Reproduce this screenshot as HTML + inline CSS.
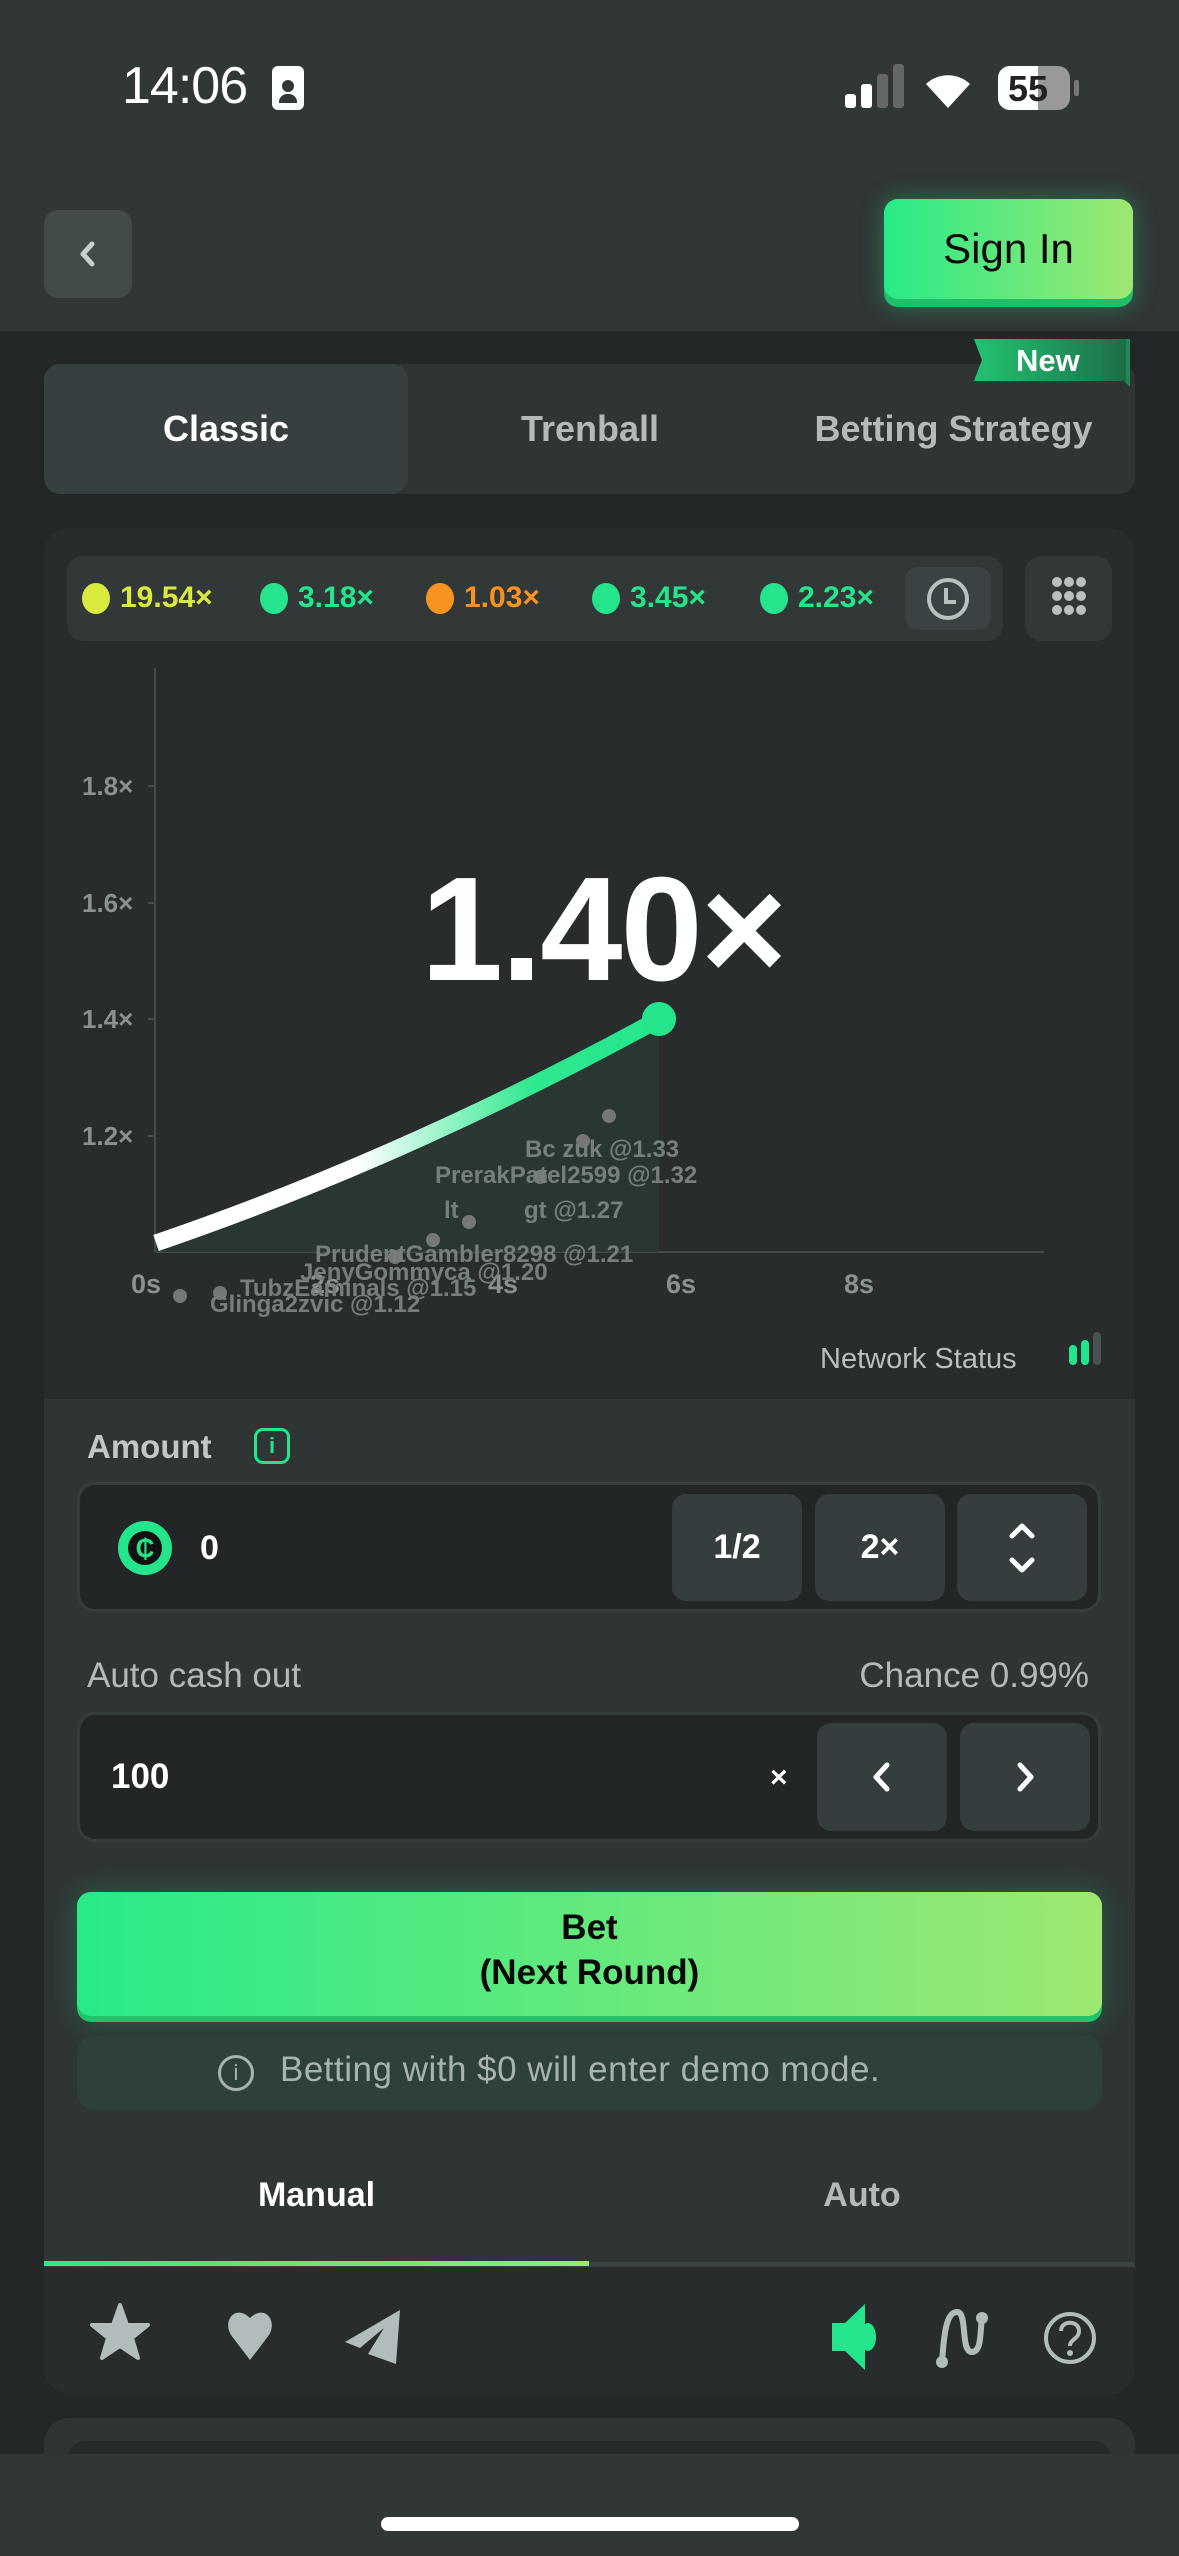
<!DOCTYPE html>
<html><head><meta charset="utf-8"><style>
*{margin:0;padding:0;box-sizing:border-box}
body{width:1179px;height:2556px;background:#232727;position:relative;overflow:hidden;font-family:"Liberation Sans",sans-serif;font-weight:bold}
.a{position:absolute}
.btn{position:absolute;background:#363d3e;border-radius:14px;color:#fff;display:flex;align-items:center;justify-content:center;font-size:34px}
</style></head><body>
<!-- header -->
<div class="a" style="left:0;top:0;width:1179px;height:331px;background:#313636"></div>
<div class="a" style="left:122px;top:56px;font-size:52px;color:#fff;font-weight:normal;letter-spacing:-1px">14:06</div>
<div class="a" style="left:272px;top:66px;width:32px;height:44px;background:#fff;border-radius:6px"><div class="a" style="left:10px;top:14px;width:12px;height:12px;border-radius:6px;background:#313636"></div><div class="a" style="left:7px;top:28px;width:18px;height:9px;border-radius:8px 8px 0 0;background:#313636"></div></div>
<div class="a" style="left:845px;top:94px;width:11px;height:14px;background:#fff;border-radius:3px"></div>
<div class="a" style="left:861px;top:84px;width:11px;height:24px;background:#fff;border-radius:3px"></div>
<div class="a" style="left:877px;top:74px;width:11px;height:34px;background:#666;border-radius:3px"></div>
<div class="a" style="left:893px;top:64px;width:11px;height:44px;background:#666;border-radius:3px"></div>
<svg class="a" style="left:922px;top:64px" width="52" height="46" viewBox="0 0 52 46"><path d="M26 44 L4 20 A32 32 0 0 1 48 20 Z" fill="#fff"/></svg>
<div class="a" style="left:998px;top:66px;width:72px;height:44px;background:#999;border-radius:12px;overflow:hidden"><div style="width:40px;height:44px;background:#fff"></div><div class="a" style="left:10px;top:2px;font-size:36px;color:#222">55</div></div>
<div class="a" style="left:1074px;top:80px;width:5px;height:16px;background:#777;border-radius:2px"></div>
<div class="a" style="left:44px;top:210px;width:88px;height:88px;background:#434a4a;border-radius:14px"></div>
<svg class="a" style="left:74px;top:238px" width="28" height="32"><path d="M18 6 L9 16 L18 26" stroke="#c8cfcf" stroke-width="5" fill="none" stroke-linecap="round" stroke-linejoin="round"/></svg>
<div class="a" style="left:884px;top:199px;width:249px;height:108px;border-radius:14px;background:#1fbf6a;box-shadow:0 0 24px rgba(40,230,130,.35)"></div>
<div class="a" style="left:884px;top:199px;width:249px;height:100px;border-radius:14px;background:linear-gradient(90deg,#28ea88,#9ee872);display:flex;align-items:center;justify-content:center;font-size:42px;color:#0a0a0a;font-weight:normal">Sign In</div>
<!-- tabs -->
<div class="a" style="left:44px;top:364px;width:1091px;height:130px;background:#2f3434;border-radius:16px"></div>
<div class="a" style="left:44px;top:364px;width:364px;height:130px;background:#383f41;border-radius:16px"></div>
<div class="a" style="left:44px;top:408px;width:364px;text-align:center;font-size:36px;color:#fff">Classic</div>
<div class="a" style="left:408px;top:408px;width:364px;text-align:center;font-size:36px;color:#b3baba">Trenball</div>
<div class="a" style="left:772px;top:408px;width:363px;text-align:center;font-size:36px;color:#b3baba">Betting Strategy</div>
<svg class="a" style="left:970px;top:339px" width="164" height="48"><path d="M4 0 H160 V48 L154 42 H4 L12 21 Z" fill="#1f8a55"/><path d="M4 0 H156 V42 H4 L12 21 Z" fill="url(#ng)"/><defs><linearGradient id="ng"><stop offset="0" stop-color="#22c372"/><stop offset="1" stop-color="#1e6e48"/></linearGradient></defs></svg>
<div class="a" style="left:1016px;top:343px;font-size:31px;color:#fff">New</div>
<!-- game card -->
<div class="a" style="left:44px;top:528px;width:1091px;height:1866px;background:#282c2d;border-radius:26px;overflow:hidden">
  <div class="a" style="left:0;top:871px;width:1091px;height:866px;background:#2f3535"></div>
</div>
<div class="a" style="left:67px;top:556px;width:936px;height:85px;background:#323838;border-radius:16px"></div>
<div class="a" style="left:905px;top:567px;width:86px;height:63px;background:#3a4243;border-radius:12px"></div>
<svg class="a" style="left:926px;top:577px" width="44" height="44"><circle cx="22" cy="22" r="19" stroke="#b8c0c0" stroke-width="4" fill="none"/><path d="M20 11 V25 H30" stroke="#b8c0c0" stroke-width="4" fill="none"/></svg>
<div class="a" style="left:1025px;top:556px;width:87px;height:85px;background:#323838;border-radius:16px"></div>
<svg class="a" style="left:1050px;top:575px" width="38" height="46"><g fill="#b8c0c0"><circle cx="7" cy="7" r="5"/><circle cx="19" cy="7" r="5"/><circle cx="31" cy="7" r="5"/><circle cx="7" cy="21" r="5"/><circle cx="19" cy="21" r="5"/><circle cx="31" cy="21" r="5"/><circle cx="7" cy="35" r="5"/><circle cx="19" cy="35" r="5"/><circle cx="31" cy="35" r="5"/></g></svg>
<div class="a" style="left:82px;top:583px;width:28px;height:31px;border-radius:50%;background:#d9ea3e"></div>
<div class="a" style="left:120px;top:581px;font-size:30px;color:#d9ea3e">19.54×</div>
<div class="a" style="left:260px;top:583px;width:28px;height:31px;border-radius:50%;background:#25e58c"></div>
<div class="a" style="left:298px;top:581px;font-size:30px;color:#25e58c">3.18×</div>
<div class="a" style="left:426px;top:583px;width:28px;height:31px;border-radius:50%;background:#f7931e"></div>
<div class="a" style="left:464px;top:581px;font-size:30px;color:#f7931e">1.03×</div>
<div class="a" style="left:592px;top:583px;width:28px;height:31px;border-radius:50%;background:#25e58c"></div>
<div class="a" style="left:630px;top:581px;font-size:30px;color:#25e58c">3.45×</div>
<div class="a" style="left:760px;top:583px;width:28px;height:31px;border-radius:50%;background:#25e58c"></div>
<div class="a" style="left:798px;top:581px;font-size:30px;color:#25e58c">2.23×</div>
<!-- chart -->
<svg class="a" style="left:0;top:0" width="1179" height="1400">
<defs><linearGradient id="cg" x1="155" y1="0" x2="659" y2="0" gradientUnits="userSpaceOnUse"><stop offset=".4" stop-color="#fff"/><stop offset=".75" stop-color="#2fe890"/><stop offset="1" stop-color="#25e58c"/></linearGradient></defs>
<line x1="155" y1="668" x2="155" y2="1252" stroke="#444b4b" stroke-width="2"/>
<line x1="155" y1="1252" x2="1044" y2="1252" stroke="#444b4b" stroke-width="2"/>
<g stroke="#444b4b" stroke-width="2"><line x1="148" y1="786" x2="155" y2="786"/><line x1="148" y1="903" x2="155" y2="903"/><line x1="148" y1="1019" x2="155" y2="1019"/><line x1="148" y1="1136" x2="155" y2="1136"/></g>
<path d="M156 1243 Q407 1157 659 1019 L659 1252 L156 1252 Z" fill="#2a3b35" opacity=".7"/>
<path d="M156 1243 Q407 1157 659 1019" stroke="url(#cg)" stroke-width="17" fill="none"/>
<circle cx="659" cy="1019" r="17" fill="#25e58c"/>
<g fill="#777"><circle cx="609" cy="1116" r="7"/><circle cx="583" cy="1141" r="7"/><circle cx="540" cy="1177" r="7"/><circle cx="469" cy="1222" r="7"/><circle cx="433" cy="1240" r="7"/><circle cx="395" cy="1257" r="7"/><circle cx="220" cy="1293" r="7"/><circle cx="180" cy="1296" r="7"/></g>
<g font-family="Liberation Sans" font-size="26" fill="#8a9191" font-weight="bold"><text x="82" y="795">1.8×</text><text x="82" y="912">1.6×</text><text x="82" y="1028">1.4×</text><text x="82" y="1145">1.2×</text></g>
<g font-family="Liberation Sans" font-size="27" fill="#8a9191" font-weight="bold"><text x="131" y="1293">0s</text><text x="310" y="1293">2s</text><text x="488" y="1293">4s</text><text x="666" y="1293">6s</text><text x="844" y="1293">8s</text></g>
<g font-family="Liberation Sans" font-size="24" fill="#777e7e"><text x="525" y="1157">Bc zuk @1.33</text><text x="435" y="1183">PrerakPatel2599 @1.32</text><text x="444" y="1218">lt</text><text x="524" y="1218">gt @1.27</text><text x="315" y="1262">PrudentGambler8298 @1.21</text><text x="300" y="1280">JenyGommyca @1.20</text><text x="240" y="1296">TubzEaminals @1.15</text><text x="210" y="1312">Glinga2zvic @1.12</text></g>
<text x="820" y="1368" font-family="Liberation Sans" font-size="29" fill="#b8bfbf" font-weight="normal">Network Status</text>
<rect x="1069" y="1345" width="8" height="20" rx="4" fill="#25e58c"/><rect x="1081" y="1340" width="8" height="25" rx="4" fill="#25e58c"/><rect x="1093" y="1332" width="8" height="33" rx="4" fill="#4a5252"/>
</svg>
<div class="a" style="left:0;top:845px;width:1179px;text-align:center;font-size:148px;color:#fff;letter-spacing:-2px;padding-left:27px">1.40×</div>
<!-- form -->
<div class="a" style="left:87px;top:1428px;font-size:33px;color:#c0c7c7">Amount</div>
<div class="a" style="left:254px;top:1428px;width:36px;height:36px;border:3px solid #25e58c;border-radius:9px;color:#25e58c;font-size:22px;text-align:center;line-height:30px">i</div>
<div class="a" style="left:77px;top:1482px;width:1024px;height:130px;background:#222627;border:3px solid #363d3e;border-radius:18px"></div>
<div class="a" style="left:118px;top:1521px;width:54px;height:54px;border-radius:50%;background:#25e58c"><div class="a" style="left:10px;top:10px;width:34px;height:34px;border-radius:50%;background:#111;color:#25e58c;font-size:26px;text-align:center;line-height:34px">₵</div></div>
<div class="a" style="left:200px;top:1529px;font-size:34px;color:#fff">0</div>
<div class="btn" style="left:672px;top:1494px;width:130px;height:107px">1/2</div>
<div class="btn" style="left:815px;top:1494px;width:130px;height:107px">2×</div>
<div class="btn" style="left:957px;top:1494px;width:130px;height:107px"><svg width="40" height="64"><path d="M10 20 L20 10 L30 20 M10 44 L20 54 L30 44" stroke="#fff" stroke-width="5" fill="none" stroke-linecap="round" stroke-linejoin="round"/></svg></div>
<div class="a" style="left:87px;top:1656px;font-size:35px;color:#b3baba;font-weight:normal">Auto cash out</div>
<div class="a" style="right:90px;top:1656px;font-size:35px;color:#b3baba;font-weight:normal">Chance 0.99%</div>
<div class="a" style="left:77px;top:1712px;width:1024px;height:130px;background:#222627;border:3px solid #363d3e;border-radius:18px"></div>
<div class="a" style="left:111px;top:1757px;font-size:35px;color:#fff">100</div>
<div class="a" style="left:770px;top:1761px;font-size:30px;color:#fff">×</div>
<div class="btn" style="left:817px;top:1723px;width:130px;height:108px"><svg width="30" height="40"><path d="M20 8 L9 20 L20 32" stroke="#fff" stroke-width="5" fill="none" stroke-linecap="round" stroke-linejoin="round"/></svg></div>
<div class="btn" style="left:960px;top:1723px;width:130px;height:108px"><svg width="30" height="40"><path d="M10 8 L21 20 L10 32" stroke="#fff" stroke-width="5" fill="none" stroke-linecap="round" stroke-linejoin="round"/></svg></div>
<div class="a" style="left:77px;top:1892px;width:1025px;height:130px;border-radius:14px;background:#1fc46d;box-shadow:0 0 30px rgba(40,230,130,.25)"></div>
<div class="a" style="left:77px;top:1892px;width:1025px;height:124px;border-radius:14px;background:linear-gradient(90deg,#28ea88,#9ee872);text-align:center;font-size:35px;color:#0a0a0a;line-height:45px;padding-top:13px">Bet<br>(Next Round)</div>
<div class="a" style="left:77px;top:2035px;width:1025px;height:75px;border-radius:18px;background:#2d403b"></div>
<div class="a" style="left:218px;top:2055px;width:36px;height:36px;border:3px solid #a8b3b1;border-radius:50%;color:#a8b3b1;font-size:22px;text-align:center;line-height:30px;font-weight:normal">i</div>
<div class="a" style="left:280px;top:2050px;font-size:35px;color:#a8b3b1;font-weight:normal;letter-spacing:.5px">Betting with $0 will enter demo mode.</div>
<div class="a" style="left:44px;top:2176px;width:545px;text-align:center;font-size:34px;color:#fff">Manual</div>
<div class="a" style="left:589px;top:2176px;width:546px;text-align:center;font-size:34px;color:#b3baba">Auto</div>
<div class="a" style="left:44px;top:2265px;width:1091px;height:129px;background:#282c2d;border-radius:0 0 26px 26px"></div>
<div class="a" style="left:44px;top:2262px;width:1091px;height:5px;background:#3a4142"></div>
<div class="a" style="left:44px;top:2261px;width:545px;height:5px;background:linear-gradient(90deg,#28ea88,#9ee872)"></div>
<svg class="a" style="left:0;top:2290px" width="1179" height="90">
<path d="M120 15 L127 35 L148 35 L132 48 L138 68 L120 56 L102 68 L108 48 L92 35 L113 35 Z" fill="#b3bcbd" stroke="#b3bcbd" stroke-width="4" stroke-linejoin="round"/>
<path d="M250 70 L231 45 C222 30 236 14 250 28 C264 14 278 30 269 45 Z" fill="#b3bcbd"/>
<path d="M400 20 L345 52 L360 58 L384 38 L368 64 L396 74 Z" fill="#b3bcbd"/>
<path d="M832 33 H845 L865 14 V80 L845 61 H832 Z" fill="#25e58c"/><ellipse cx="868" cy="47" rx="8" ry="14" fill="#25e58c"/>
<path d="M942 72 C944 45 946 22 957 22 C968 22 960 62 972 62 C982 62 980 40 982 28" stroke="#b3bcbd" stroke-width="6" fill="none" stroke-linecap="round"/><circle cx="942" cy="72" r="6" fill="#b3bcbd"/><circle cx="982" cy="28" r="6" fill="#b3bcbd"/>
<circle cx="1070" cy="48" r="24" stroke="#b3bcbd" stroke-width="4" fill="none"/><path d="M1061 41 C1061 30 1079 30 1079 41 C1079 49 1070 49 1070 56" stroke="#b3bcbd" stroke-width="4" fill="none"/><circle cx="1070" cy="63" r="3" fill="#b3bcbd"/>
</svg>
<!-- next card -->
<div class="a" style="left:44px;top:2418px;width:1091px;height:100px;background:#2f3535;border-radius:26px"></div>
<div class="a" style="left:67px;top:2441px;width:1045px;height:60px;background:#262a2b;border-radius:18px"></div>
<div class="a" style="left:0;top:2454px;width:1179px;height:102px;background:#313636"></div>
<div class="a" style="left:381px;top:2517px;width:418px;height:14px;background:#fff;border-radius:7px"></div>
</body></html>
